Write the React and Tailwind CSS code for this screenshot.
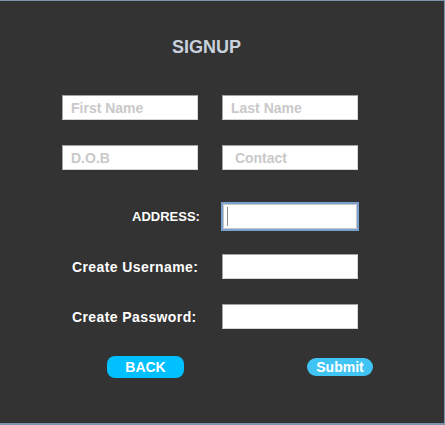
import React from "react";

function Field({ placeholder, indent = "pl-[8px]" }) {
  return (
    <input
      readOnly
      placeholder={placeholder}
      className={`w-[136px] h-[25px] bg-white border border-[#a3a3a3] border-b-[#d6d6d6] border-r-[#d6d6d6] ${indent} text-[14px] font-bold text-black placeholder:text-[#c9c9c9] outline-none font-['Liberation_Sans',Arial,sans-serif]`}
    />
  );
}

export default function App() {
  return (
    <div className="w-[445px] h-[425px] bg-[#333333] border-t border-r border-b-2 border-[#7c93a9] font-['Liberation_Sans',Arial,sans-serif]">
      <div className="pt-[36px] pl-[172px] text-[18px] leading-[20px] font-bold text-[#c9d1dc]">
        SIGNUP
      </div>

      <div className="mt-[38px] pl-[62px] flex gap-[24px]">
        <Field placeholder="First Name" />
        <Field placeholder="Last Name" />
      </div>

      <div className="mt-[25px] pl-[62px] flex gap-[24px]">
        <Field placeholder="D.O.B" />
        <Field placeholder=" Contact" indent="pl-[8px]" />
      </div>

      <div className="mt-[32px] pl-[62px] flex items-center">
        <div className="w-[159px] pl-[70px] text-[13px] font-bold text-white leading-none">
          ADDRESS:
        </div>
        <div className="w-[138px] h-[29px] border-2 border-[#7aa1cd] bg-[#c9c9c9] p-px">
          <div className="w-full h-full bg-white flex items-center pl-[3px]">
            <div className="w-px h-[19px] bg-[#8a8a8a]" />
          </div>
        </div>
      </div>

      <div className="mt-[23px] pl-[62px] flex items-center">
        <div className="w-[160px] pl-[10px] text-[14px] font-bold text-white leading-none tracking-[0.4px]">
          Create Username:
        </div>
        <Field placeholder="" />
      </div>

      <div className="mt-[25px] pl-[62px] flex items-center">
        <div className="w-[160px] pl-[10px] text-[14px] font-bold text-white leading-none tracking-[0.4px]">
          Create Password:
        </div>
        <Field placeholder="" />
      </div>

      <div className="mt-[27px] pl-[107px] flex items-center gap-[123px]">
        <button className="w-[77px] h-[22px] rounded-[8px] bg-[#00c0ff] text-white text-[14px] font-bold leading-none">
          BACK
        </button>
        <button className="w-[66px] h-[18px] rounded-full bg-[#3fc4f4] text-white text-[14px] font-bold leading-none">
          Submit
        </button>
      </div>
    </div>
  );
}
